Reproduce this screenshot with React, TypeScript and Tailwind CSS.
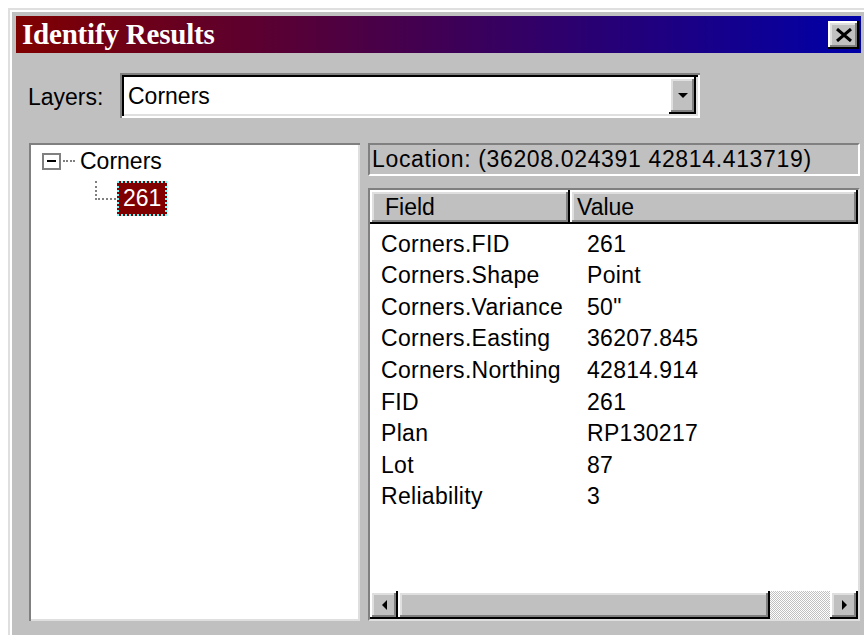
const RAISED =
  'shadow-[inset_-2px_-2px_0_#000,inset_2px_2px_0_#fff,inset_-4px_-4px_0_#808080,inset_4px_4px_0_#dfdfdf]'

interface Row {
  field: string
  value: string
}

const rows: Row[] = [
  { field: 'Corners.FID', value: '261' },
  { field: 'Corners.Shape', value: 'Point' },
  { field: 'Corners.Variance', value: '50"' },
  { field: 'Corners.Easting', value: '36207.845' },
  { field: 'Corners.Northing', value: '42814.914' },
  { field: 'FID', value: '261' },
  { field: 'Plan', value: 'RP130217' },
  { field: 'Lot', value: '87' },
  { field: 'Reliability', value: '3' },
]

function Arrow({ dir }: { dir: 'down' | 'left' | 'right' }) {
  const pts =
    dir === 'down' ? '0,0 10,0 5,5' : dir === 'left' ? '5,0 5,10 0,5' : '0,0 0,10 5,5'
  const [w, h] = dir === 'down' ? [10, 5] : [5, 10]
  return (
    <svg width={w} height={h} viewBox={`0 0 ${w} ${h}`}>
      <polygon points={pts} fill="#000" />
    </svg>
  )
}

function TitleBar() {
  return (
    <div className="h-[37px] flex items-center justify-between bg-[linear-gradient(to_right,#800000,#0000a8)] pl-[6px] pr-[2px]">
      <span className="text-white font-bold text-[29px] leading-none font-['Liberation_Serif',serif] tracking-[-0.2px]">
        Identify Results
      </span>
      <button className={`w-[31px] h-[28px] bg-[#c0c0c0] ${RAISED} flex items-center justify-center`}>
        <svg width="16" height="14" viewBox="0 0 16 14">
          <path d="M1 1 L15 13 M15 1 L1 13" stroke="#000" strokeWidth="3" />
        </svg>
      </button>
    </div>
  )
}

function LayersRow() {
  return (
    <div className="mt-[20px] flex items-center h-[45px]">
      <span className="ml-[12px] w-[92px] text-[23px] text-black pt-[4px]">Layers:</span>
      <div className="w-[580px] h-[45px] bg-white shadow-[inset_2px_2px_0_#808080,inset_-2px_-2px_0_#fff,inset_4px_4px_0_#000,inset_-4px_-4px_0_#dfdfdf] flex items-center p-[4px]">
        <span className="flex-1 pl-[4px] pt-[2px] text-[23px] text-black">Corners</span>
        <div className={`w-[27px] h-[37px] bg-[#c0c0c0] ${RAISED} flex items-center justify-center`}>
          <Arrow dir="down" />
        </div>
      </div>
    </div>
  )
}

function Tree() {
  return (
    <div className="w-[331px] h-[478px] ml-[13px] bg-white border-t-2 border-l-2 border-[#808080] shadow-[inset_-2px_-2px_0_#dfdfdf] pt-[1px] pl-[11px] text-[23px] text-black">
      <div className="flex items-center h-[30px]">
        <div className="w-[19px] h-[17px] border-2 border-[#808080] bg-white flex items-center justify-center">
          <div className="w-[9px] h-[2px] bg-black" />
        </div>
        <div className="w-[12px] border-t-2 border-dotted border-[#808080] ml-[2px]" />
        <span className="ml-[5px]">Corners</span>
      </div>
      <div className="flex items-start ml-[53px] mt-[5px]">
        <div className="w-[21px] h-[19px] border-l-2 border-b-2 border-dotted border-[#808080]" />
        <span className="ml-[1px] bg-[#800000] text-white border-2 border-dotted border-[#6ff] px-[4px] h-[35px] leading-[31px]">
          261
        </span>
      </div>
    </div>
  )
}

function Scrollbar() {
  return (
    <div className="h-[28px] flex">
      <div className={`w-[28px] h-full bg-[#c0c0c0] ${RAISED} flex items-center justify-center`}>
        <Arrow dir="left" />
      </div>
      <div className={`w-[372px] h-full bg-[#c0c0c0] ${RAISED}`} />
      <div className="flex-1 h-full bg-[repeating-conic-gradient(#c0c0c0_0_25%,#fff_0_50%)] bg-[length:2px_2px]" />
      <div className={`w-[28px] h-full bg-[#c0c0c0] ${RAISED} flex items-center justify-center`}>
        <Arrow dir="right" />
      </div>
    </div>
  )
}

function Results() {
  return (
    <div className="w-[492px] h-[478px] ml-[8px] flex flex-col text-[23px] text-black">
      <div className="h-[33px] shrink-0 border-t-2 border-l-2 border-[#808080] border-b-2 border-r-2 border-b-white border-r-white flex items-center pl-[2px] tracking-[0.65px] whitespace-nowrap">
        Location: (36208.024391 42814.413719)
      </div>
      <div className="mt-[12px] flex-1 flex flex-col bg-white border-t-2 border-l-2 border-[#808080] border-b-2 border-r-2 border-b-[#dfdfdf] border-r-[#dfdfdf]">
        <div className="h-[34px] flex shrink-0">
          <div className={`w-[200px] bg-[#c0c0c0] ${RAISED} pl-[15px] flex items-center`}>Field</div>
          <div className={`flex-1 bg-[#c0c0c0] ${RAISED} pl-[7px] flex items-center`}>Value</div>
        </div>
        <div className="flex-1 pt-[4px]">
          {rows.map((r) => (
            <div key={r.field} className="flex h-[31.6px] items-center">
              <span className="w-[217px] pl-[11px] tracking-[0.3px]">{r.field}</span>
              <span className="tracking-[0.3px]">{r.value}</span>
            </div>
          ))}
        </div>
        <Scrollbar />
      </div>
    </div>
  )
}

export default function App() {
  return (
    <div className="w-[864px] h-[635px] bg-white overflow-hidden pt-2 pl-2 font-['Liberation_Sans',Arial,sans-serif]">
      <div className="w-[861px] h-[640px] bg-[#c0c0c0] border-l-2 border-t-2 border-[#dfdfdf] shadow-[inset_2px_2px_0_#fff] pl-[6px] pt-[6px] pr-2 flex flex-col">
        <TitleBar />
        <LayersRow />
        <div className="mt-[25px] flex">
          <Tree />
          <Results />
        </div>
      </div>
    </div>
  )
}
